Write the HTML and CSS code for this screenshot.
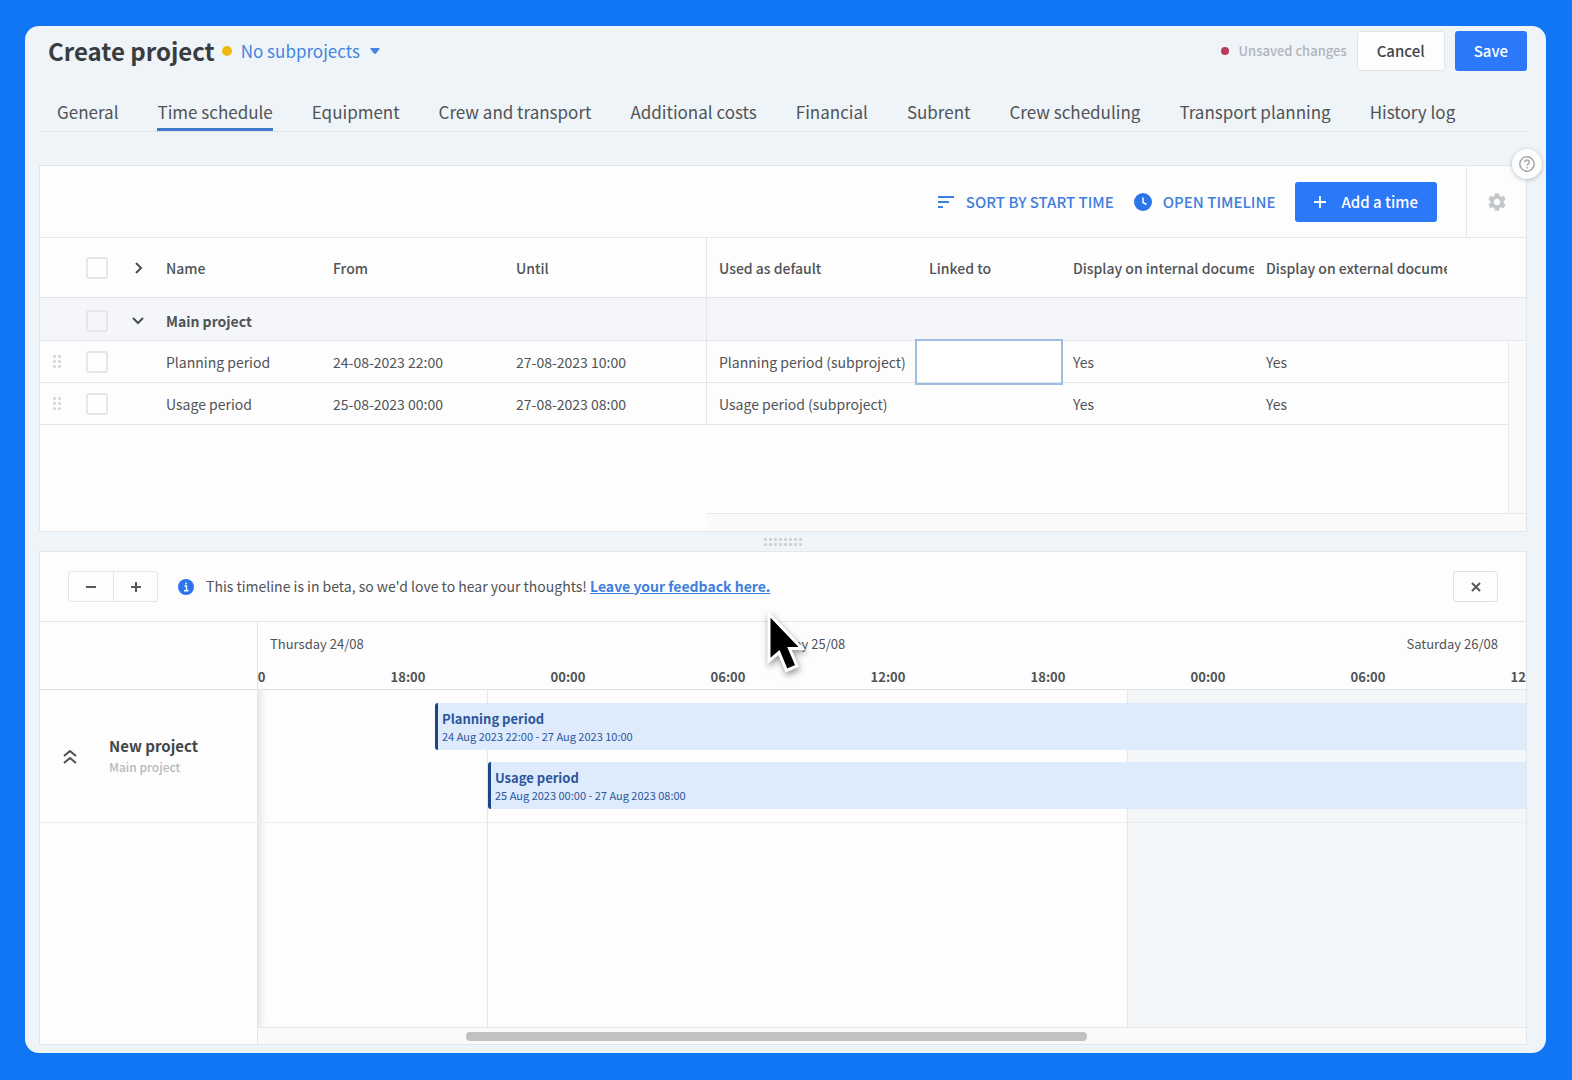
FILE: index.html
```html
<!DOCTYPE html>
<html lang="en">
<head>
    <meta charset="UTF-8">
    <meta name="viewport" content="width=device-width, initial-scale=1.0">
    <title>Create project</title>
    <link rel="stylesheet" href="styles.css">
</head>
<body>

    <div class="window">

        <!-- Title bar -->
        <header class="header">
            <h1>Create project</h1>
            <span class="dot dot-yellow"></span>
            <button class="subprojects" type="button">
                No subprojects
                <svg width="10" height="6" viewBox="0 0 10 6"><path d="M1 0h8q1 0 .6 1L6 5.400q-1 .8-2 0L.4 1Q0 0 1 0z" fill="currentColor"/></svg>
            </button>
            <div class="header-actions">
                <span class="dot dot-red"></span>
                <span class="unsaved">Unsaved changes</span>
                <button class="btn btn-light" type="button">Cancel</button>
                <button class="btn btn-primary" type="button">Save</button>
            </div>
        </header>

        <!-- Tabs -->
        <nav class="tabs">
            <a href="#">General</a>
            <a href="#" class="active">Time schedule</a>
            <a href="#">Equipment</a>
            <a href="#">Crew and transport</a>
            <a href="#">Additional costs</a>
            <a href="#">Financial</a>
            <a href="#">Subrent</a>
            <a href="#">Crew scheduling</a>
            <a href="#">Transport planning</a>
            <a href="#">History log</a>
        </nav>

        <!-- Times -->
        <section class="panel times">
            <button class="help" type="button" aria-label="Help">
                <svg width="16" height="16" viewBox="0 0 16 16" fill="none" stroke="#a3a7ab" stroke-width="1.500"><circle cx="8" cy="8" r="7.200"/><path d="M5.700 6.300C5.700 3.300 10.300 3.300 10.300 6.200C10.300 8 8 8 8 9.800"/><path d="M8 11v1.600"/></svg>
            </button>

            <div class="toolbar">
                <button class="link-btn" type="button">
                    <svg width="17" height="12" viewBox="0 0 17 12" stroke="currentColor" stroke-width="2"><path d="M0 1h16M0 6h11M0 11h5"/></svg>
                    SORT BY START TIME
                </button>
                <button class="link-btn" type="button">
                    <svg width="18" height="18" viewBox="0 0 18 18"><circle cx="9" cy="9" r="9" fill="#2b75ec"/><path d="M9 4.500v5l3.500 2" fill="none" stroke="#fff" stroke-width="1.500"/></svg>
                    OPEN TIMELINE
                </button>
                <button class="btn btn-primary btn-add" type="button">
                    <svg width="12" height="12" viewBox="0 0 12 12" stroke="#fff" stroke-width="1.800"><path d="M6 0v12M0 6h12"/></svg>
                    Add a time
                </button>
                <button class="settings" type="button" aria-label="Settings">
                    <svg width="22" height="22" viewBox="0 0 24 24" fill="#c4c7c9"><path d="M19.140 12.940c.04-.3.060-.61.060-.94 0-.32-.02-.64-.07-.94l2.030-1.580c.18-.14.230-.41.120-.61l-1.920-3.320c-.12-.22-.37-.29-.59-.22l-2.390.96c-.5-.38-1.030-.7-1.620-.94l-.36-2.540c-.04-.24-.24-.41-.48-.41h-3.840c-.24 0-.43.170-.47.410l-.36 2.540c-.59.240-1.130.570-1.620.940l-2.390-.96c-.22-.08-.47 0-.59.220L2.740 8.870c-.12.210-.08.470.12.610l2.030 1.580c-.05.300-.09.630-.09.940s.02.640.07.940l-2.030 1.580c-.18.140-.23.410-.12.610l1.920 3.320c.12.220.37.290.59.220l2.390-.96c.5.380 1.030.7 1.620.940l.36 2.540c.05.240.24.410.48.410h3.840c.24 0 .44-.17.470-.41l.36-2.540c.59-.24 1.130-.56 1.620-.94l2.390.96c.22.080.47 0 .59-.22l1.920-3.320c.12-.22.070-.47-.12-.61l-2.010-1.580zM12 15.600c-1.980 0-3.600-1.620-3.600-3.600s1.620-3.600 3.600-3.600 3.600 1.620 3.600 3.600-1.620 3.600-3.600 3.600z"/></svg>
                </button>
            </div>

            <div class="table-wrap">
                <table>
                    <colgroup>
                        <col class="c-drag"><col class="c-check"><col class="c-toggle">
                        <col class="c-name"><col class="c-from"><col class="c-until">
                        <col class="c-default"><col class="c-linked"><col class="c-doc"><col class="c-doc"><col>
                    </colgroup>
                    <thead>
                        <tr>
                            <th></th>
                            <th><input type="checkbox" aria-label="Select all"></th>
                            <th><svg width="12" height="12" viewBox="0 0 12 12" class="chevron"><path d="M4 1l5 5-5 5"/></svg></th>
                            <th>Name</th>
                            <th>From</th>
                            <th class="split">Until</th>
                            <th>Used as default</th>
                            <th>Linked to</th>
                            <th>Display on internal documents</th>
                            <th>Display on external documents</th>
                            <th></th>
                        </tr>
                    </thead>
                    <tbody>
                        <tr class="group">
                            <td></td>
                            <td><input type="checkbox" aria-label="Select Main project"></td>
                            <td><svg width="12" height="8" viewBox="0 0 12 8" class="chevron"><path d="M1 1l5 5 5-5"/></svg></td>
                            <td>Main project</td>
                            <td></td>
                            <td class="split"></td>
                            <td></td>
                            <td></td>
                            <td></td>
                            <td></td>
                            <td></td>
                        </tr>
                        <tr>
                            <td><span class="grip"></span></td>
                            <td><input type="checkbox" aria-label="Select Planning period"></td>
                            <td></td>
                            <td>Planning period</td>
                            <td>24-08-2023 22:00</td>
                            <td class="split">27-08-2023 10:00</td>
                            <td>Planning period (subproject)</td>
                            <td class="selected"></td>
                            <td>Yes</td>
                            <td>Yes</td>
                            <td></td>
                        </tr>
                        <tr>
                            <td><span class="grip"></span></td>
                            <td><input type="checkbox" aria-label="Select Usage period"></td>
                            <td></td>
                            <td>Usage period</td>
                            <td>25-08-2023 00:00</td>
                            <td class="split">27-08-2023 08:00</td>
                            <td>Usage period (subproject)</td>
                            <td></td>
                            <td>Yes</td>
                            <td>Yes</td>
                            <td></td>
                        </tr>
                    </tbody>
                </table>
                <div class="track-v"></div>
                <div class="track-h"></div>
            </div>
        </section>

        <div class="splitter"><span></span></div>

        <!-- Timeline -->
        <section class="panel timeline">
            <div class="banner">
                <div class="zoom">
                    <button type="button" aria-label="Zoom out"><svg width="10" height="10" viewBox="0 0 10 10"><path d="M0 5h10"/></svg></button>
                    <button type="button" aria-label="Zoom in"><svg width="10" height="10" viewBox="0 0 10 10"><path d="M0 5h10M5 0v10"/></svg></button>
                </div>
                <svg class="info" width="16" height="16" viewBox="0 0 16 16"><circle cx="8" cy="8" r="8" fill="#2b75ec"/><path d="M6.500 7H8.500V11.500M6 11.700h4.500M8 3.500v2" stroke="#fff" stroke-width="1.400" fill="none"/></svg>
                <p>This timeline is in beta, so we'd love to hear your thoughts! <a href="#">Leave your feedback here.</a></p>
                <button class="close" type="button" aria-label="Close"><svg width="10" height="10" viewBox="0 0 10 10"><path d="M1 1l8 8M9 1l-8 8"/></svg></button>
            </div>

            <div class="chart">
                <div class="side">
                    <div class="side-head"></div>
                    <div class="project">
                        <svg width="14" height="15" viewBox="0 0 14 15" class="chevron"><path d="M1 7l6-5 6 5M1 14l6-5 6 5"/></svg>
                        <div>
                            <strong>New project</strong>
                            <small>Main project</small>
                        </div>
                    </div>
                </div>

                <div class="canvas">
                    <div class="scale">
                        <div class="dates">
                            <span>Thursday 24/08</span>
                            <span>Friday 25/08</span>
                            <span>Saturday 26/08</span>
                        </div>
                        <div class="hours">
                            <span>12:00</span><span>18:00</span><span>00:00</span><span>06:00</span><span>12:00</span><span>18:00</span><span>00:00</span><span>06:00</span><span>12:00</span>
                        </div>
                    </div>
                    <div class="rows">
                        <div class="days"><span></span><span></span><span class="weekend"></span></div>
                        <div class="lanes">
                            <div class="bar" style="--start: 177px">
                                <strong>Planning period</strong>
                                <small>24 Aug 2023 22:00 - 27 Aug 2023 10:00</small>
                            </div>
                            <div class="bar" style="--start: 230px">
                                <strong>Usage period</strong>
                                <small>25 Aug 2023 00:00 - 27 Aug 2023 08:00</small>
                            </div>
                        </div>
                    </div>
                    <div class="scrollbar"><span></span></div>
                </div>
            </div>
        </section>

        <svg class="cursor" width="44" height="68" viewBox="0 0 44 68"><path d="M6 6V53L16 44.500L23.500 62.500L34 58L26.500 40.500H39Z" fill="#000" stroke="#fff" stroke-width="3"/></svg>
    </div>

</body>
</html>
```
FILE: styles.css
```css
* {
    margin: 0;
    padding: 0;
    box-sizing: border-box;
}

body {
    display: flex;
    min-height: 100vh;
    padding: 26px 26px 27px 25px;
    background: #1076f3;
    font-family: "Noto Sans CJK SC", "Noto Sans", sans-serif;
    font-size: 14px;
    line-height: 20px;
    color: #505356;
}

button {
    border: none;
    background: none;
    font: inherit;
    color: inherit;
    cursor: pointer;
}

a {
    color: inherit;
    text-decoration: none;
}

.window {
    position: relative;
    display: flex;
    flex-direction: column;
    flex: 1;
    min-width: 0;
    padding: 0 19px 8px 14px;
    border-radius: 14px;
    background: #eff4f8;
}

/* Title bar */
.header {
    display: flex;
    align-items: center;
    height: 50px;
    padding-left: 9px;
}

.header h1 {
    font-size: 24px;
    line-height: 32px;
    color: #3a3d40;
}

.dot {
    width: 10px;
    height: 10px;
    border-radius: 50%;
}

.dot-yellow {
    margin: 0 9px 0 7px;
    background: #f0b90f;
}

.dot-red {
    width: 8px;
    height: 8px;
    background: #bd3a5c;
}

.subprojects {
    display: flex;
    align-items: center;
    gap: 10px;
    font-size: 17px;
    color: #4384e0;
}

.header-actions {
    display: flex;
    align-items: center;
    gap: 10px;
    margin-left: auto;
}

.unsaved {
    font-size: 13px;
    font-weight: 500;
    color: #b0b4b8;
}

.btn {
    height: 40px;
    padding: 0 19px;
    border-radius: 3px;
    font-size: 15px;
    font-weight: 500;
}

.btn-light {
    border: 1px solid #e3e6e9;
    background: #fdfdfd;
    color: #434649;
}

.btn-primary {
    background: #2b78f8;
    color: #fff;
}

/* Tabs */
.tabs {
    display: flex;
    gap: 39px;
    height: 56px;
    padding: 0 17px;
    margin-left: 1px;
    border-bottom: 1px solid #e0e4e7;
    font-size: 17px;
    white-space: nowrap;
}

.tabs a {
    padding-top: 26px;
}

.tabs .active {
    border-bottom: 3px solid #4079d0;
}

/* Panels */
.panel {
    border: 1px solid #e3e7ea;
    background: #fdfdfd;
}

.times {
    position: relative;
    margin-top: 33px;
}

.help {
    position: absolute;
    top: -17px;
    right: -16px;
    display: grid;
    place-items: center;
    width: 30px;
    height: 30px;
    border-radius: 50%;
    background: #fdfdfd;
    box-shadow: 0 1px 4px rgba(0, 0, 0, 0.25);
}

.toolbar {
    display: flex;
    align-items: center;
    justify-content: flex-end;
    height: 72px;
    border-bottom: 1px solid #e6e8ea;
}

.link-btn {
    display: flex;
    align-items: center;
    gap: 11px;
    margin-right: 20px;
    font-size: 15px;
    font-weight: 500;
    color: #3f7fdc;
}

.btn-add {
    display: flex;
    align-items: center;
    gap: 15px;
    margin-right: 29px;
}

.settings {
    display: grid;
    place-items: center;
    align-self: stretch;
    width: 60px;
    border-left: 1px solid #e6e8ea;
}

/* Table */
.table-wrap {
    position: relative;
    height: 293px;
    overflow: hidden;
}

table {
    width: 100%;
    table-layout: fixed;
    border-collapse: separate;
    border-spacing: 0;
}

.c-drag { width: 34px; }
.c-check { width: 46px; }
.c-toggle { width: 34px; }
.c-name { width: 167px; }
.c-from { width: 183px; }
.c-until { width: 203px; }
.c-default { width: 210px; }
.c-linked { width: 144px; }
.c-doc { width: 193px; }

th,
td {
    height: 42px;
    padding: 0 0 0 12px;
    border-bottom: 1px solid #e3e5e7;
    text-align: left;
    white-space: nowrap;
    overflow: hidden;
}

th {
    height: 60px;
    font-weight: 500;
}

.group td {
    height: 43px;
    padding-top: 3px;
    background: #f4f6f9;
    font-weight: 700;
}

.split {
    border-right: 1px solid #e3e5e7;
}

.selected {
    outline: 2px solid #9dbde4;
    background: #fff;
}

input[type="checkbox"] {
    appearance: none;
    display: block;
    width: 22px;
    height: 22px;
    border: 2px solid #e5e6e8;
    border-radius: 3px;
}

.chevron {
    display: block;
    margin: 0 auto;
    fill: none;
    stroke: #4b4e51;
    stroke-width: 2;
}

th .chevron,
td .chevron {
    margin: 0;
}

.grip {
    display: block;
    width: 10px;
    height: 15px;
    background: radial-gradient(circle, #d4d7d9 1px, transparent 2px) 0 0 / 5px 5px;
}

.track-v {
    position: absolute;
    top: 104px;
    right: 0;
    bottom: 17px;
    width: 18px;
    border-left: 1px solid #e6e8ea;
    background: #fafafa;
}

.track-h {
    position: absolute;
    right: 0;
    bottom: 0;
    left: 667px;
    height: 18px;
    border-top: 1px solid #e6e8ea;
    background: #fafafa;
}

/* Splitter */
.splitter {
    display: flex;
    align-items: center;
    justify-content: center;
    height: 19px;
}

.splitter span {
    width: 40px;
    height: 10px;
    background: radial-gradient(circle, #cbcfd2 1px, transparent 2px) 0 0 / 5px 5px;
}

/* Timeline */
.timeline {
    display: flex;
    flex-direction: column;
    flex: 1;
}

.banner {
    display: flex;
    align-items: center;
    height: 70px;
    padding: 0 28px;
    border-bottom: 1px solid #e3e5e7;
}

.zoom {
    display: flex;
    margin-right: 20px;
    border: 1px solid #e3e5e7;
    border-radius: 3px;
}

.zoom button,
.close {
    display: grid;
    place-items: center;
    width: 44px;
    height: 29px;
    fill: none;
    stroke: #57595c;
    stroke-width: 2;
}

.zoom button + button {
    border-left: 1px solid #e3e5e7;
}

.info {
    margin-right: 12px;
}

.banner p {
    padding-bottom: 2px;
}

.banner p a {
    font-weight: 700;
    color: #3f7fdc;
    text-decoration: underline;
}

.close {
    width: 45px;
    height: 31px;
    margin-left: auto;
    border: 1px solid #e0e3e5;
    border-radius: 3px;
}

.chart {
    display: flex;
    flex: 1;
}

.side {
    width: 218px;
    border-right: 1px solid #e3e5e7;
}

.side-head,
.scale {
    height: 68px;
    border-bottom: 1px solid #dfe1e3;
}

.project {
    display: grid;
    grid-template-columns: 59px 1fr;
    gap: 10px;
    align-items: center;
    height: 133px;
    border-bottom: 1px solid #ebedee;
}

.project div {
    padding-top: 2px;
}

.project strong,
.project small {
    display: block;
}

.project strong {
    font-size: 15px;
    font-weight: 700;
    color: #434649;
}

.project small {
    font-size: 12px;
    font-weight: 500;
    line-height: 22px;
    color: #b8babd;
}

.canvas {
    display: flex;
    flex-direction: column;
    flex: 1;
    min-width: 0;
    overflow: hidden;
}

.dates,
.days {
    display: grid;
    grid-template-columns: 230px 640px 1fr;
}

.dates {
    height: 45px;
    padding-top: 12px;
    font-size: 13px;
    text-align: center;
}

.dates span:first-child {
    padding-left: 12px;
    text-align: left;
}

.dates span:last-child {
    padding-right: 28px;
    text-align: right;
}

.hours {
    display: flex;
    margin-left: -90px;
    font-size: 13px;
    font-weight: 700;
    text-align: center;
}

.hours span {
    flex: 0 0 160px;
}

.rows {
    position: relative;
    flex: 1;
    box-shadow: inset 8px 0 8px -6px rgba(0, 0, 0, 0.12);
}

.days {
    position: absolute;
    inset: 0;
}

.days span:not(:last-child) {
    border-right: 1px solid #e4e6e8;
}

.weekend {
    background: #f4f7fa;
}

.lanes {
    position: relative;
    display: flex;
    flex-direction: column;
    gap: 12px;
    height: 133px;
    padding-top: 13px;
    border-bottom: 1px solid #ebedee;
}

.bar {
    height: 47px;
    margin-left: var(--start);
    padding: 7px 0 0 4px;
    border-left: 3px solid #1c4587;
    border-radius: 3px 0 0 3px;
    background: #deebfc;
    color: #2c559b;
}

.bar strong,
.bar small {
    display: block;
}

.bar strong {
    font-size: 13px;
    line-height: 18px;
}

.bar small {
    font-size: 11px;
    line-height: 16px;
}

.scrollbar {
    height: 17px;
    padding-top: 4px;
    border-top: 1px solid #e6e8ea;
    background: #fafafa;
}

.scrollbar span {
    display: block;
    width: 49%;
    height: 9px;
    margin-left: 208px;
    border-radius: 4px;
    background: #c1c1c1;
}

/* Mouse pointer */
.cursor {
    position: absolute;
    top: 582px;
    left: 738px;
    filter: drop-shadow(1px 3px 3px rgba(0, 0, 0, 0.4));
}
```
